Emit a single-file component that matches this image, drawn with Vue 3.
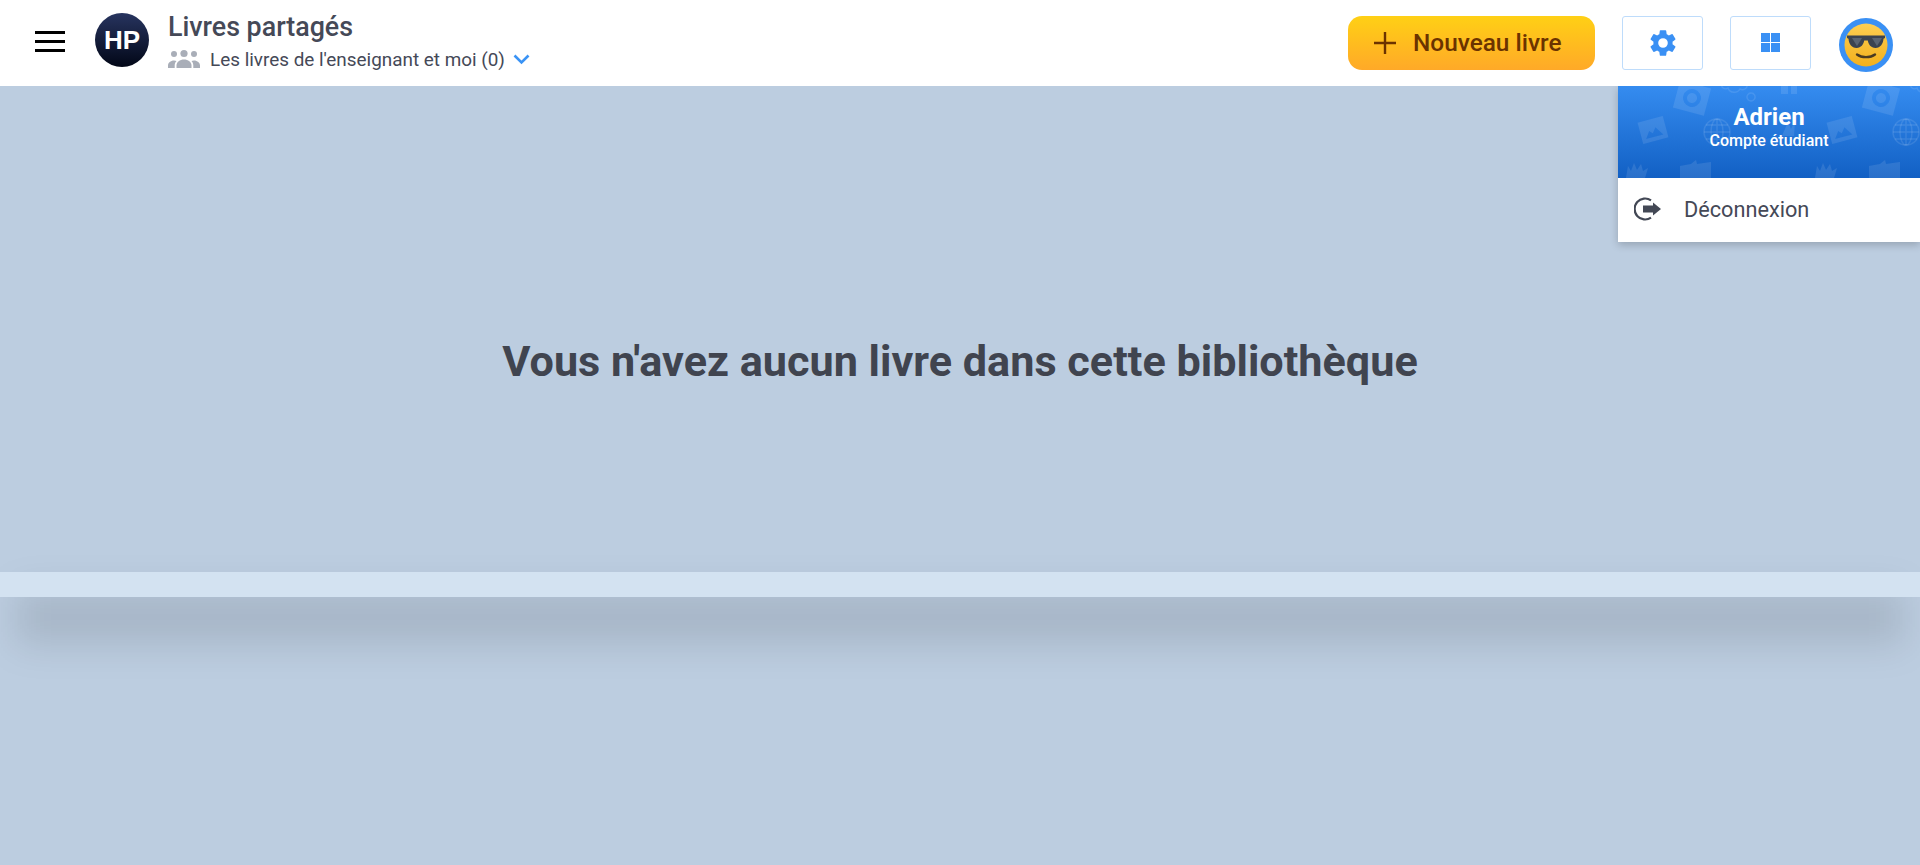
<script setup>
const patternFill = 'rgba(255, 255, 255, 0.1)'
</script>

<template>
  <div class="page">
    <header class="topbar">
      <button class="burger" aria-label="Menu">
        <span></span><span></span><span></span>
      </button>
      <div class="logo">HP</div>
      <div class="titles">
        <div class="title">Livres partagés</div>
        <div class="subtitle">
          <svg class="group-icon" viewBox="0 0 32 20" width="32" height="20">
            <circle cx="6" cy="5" r="3" fill="#a9aeb8" />
            <circle cx="16" cy="4.500" r="3.600" fill="#a9aeb8" />
            <circle cx="26" cy="5" r="3" fill="#a9aeb8" />
            <path d="M0 19v-2.500c0-2.600 2.600-5 6-5 1 0 1.800.2 2.500.5-1.200 1.300-1.800 2.800-1.800 4.500V19z" fill="#a9aeb8" />
            <path d="M8.500 19v-2.500c0-3.400 3.300-6 7.500-6s7.500 2.600 7.500 6V19z" fill="#a9aeb8" />
            <path d="M32 19v-2.500c0-2.600-2.600-5-6-5-1 0-1.800.2-2.500.5 1.200 1.300 1.800 2.800 1.800 4.500V19z" fill="#a9aeb8" />
          </svg>
          <span>Les livres de l'enseignant et moi (0)</span>
          <svg class="chevron" viewBox="0 0 17 11" width="17" height="11">
            <path d="M1.500 1.500 8.500 8.500l7-7" fill="none" stroke="#3a93f5" stroke-width="2.600" />
          </svg>
        </div>
      </div>

      <button class="new-book">
        <svg viewBox="0 0 22 22" width="22" height="22">
          <path d="M11 0v22M0 11h22" stroke="#6b3300" stroke-width="2.400" />
        </svg>
        <span>Nouveau livre</span>
      </button>

      <button class="square-btn" aria-label="Réglages">
        <svg viewBox="0 0 24 24" width="32" height="32">
          <path fill="#3a90f4" d="M19.140 12.940c.04-.3.060-.61.060-.94 0-.32-.02-.64-.07-.94l2.030-1.580a.49.49 0 0 0 .12-.61l-1.920-3.320a.49.49 0 0 0-.59-.22l-2.390.96c-.5-.38-1.030-.7-1.620-.94l-.36-2.540a.48.48 0 0 0-.48-.41h-3.840a.47.47 0 0 0-.47.41l-.36 2.540c-.59.24-1.130.57-1.620.94l-2.390-.96a.48.48 0 0 0-.59.22L2.740 8.870a.47.47 0 0 0 .12.61l2.030 1.580c-.05.3-.09.63-.09.94s.02.640.07.94l-2.030 1.580a.49.49 0 0 0-.12.61l1.920 3.320c.12.220.37.290.59.220l2.390-.96c.5.380 1.030.7 1.620.94l.36 2.540c.05.240.24.410.48.410h3.840c.24 0 .44-.17.470-.41l.36-2.540c.59-.24 1.130-.56 1.620-.94l2.390.96c.22.080.47 0 .59-.22l1.920-3.320a.47.47 0 0 0-.12-.61zM12 15.600A3.610 3.610 0 0 1 8.400 12 3.610 3.610 0 0 1 12 8.400a3.610 3.610 0 0 1 3.600 3.600 3.610 3.610 0 0 1-3.600 3.600z" />
        </svg>
      </button>
      <button class="square-btn" aria-label="Affichage">
        <svg viewBox="0 0 19 19" width="19" height="19">
          <path fill="#3a90f4" d="M0 0h9v9H0zM10 0h9v9h-9zM0 10h9v9H0zM10 10h9v9h-9z" />
        </svg>
      </button>

      <div class="avatar">
        <svg viewBox="0 0 54 54" width="54" height="54">
          <defs>
            <linearGradient id="face" x1="0" y1="0" x2="0" y2="1">
              <stop offset="0" stop-color="#fdce52" />
              <stop offset="1" stop-color="#f3b01c" />
            </linearGradient>
          </defs>
          <circle cx="27" cy="27" r="27" fill="#3a90f4" />
          <circle cx="27" cy="27" r="21.500" fill="url(#face)" />
          <path d="M8 17.500h38v2.500l-1.500.8c-.3 5-3 9.200-8 9.200-4.700 0-7-3.800-7.700-7.500h-3.600c-.7 3.700-3 7.500-7.700 7.500-5 0-7.700-4.200-8-9.200L8 20z" fill="#3b4350" />
          <path d="M13 20h10l-5 8zM33 20h10l-5 8z" fill="#5a6472" />
          <path d="M18 36.500c4.500 3.500 13.500 3.500 18 0" fill="none" stroke="#4a3a22" stroke-width="2.400" stroke-linecap="round" />
        </svg>
      </div>
    </header>

    <main class="content">
      <section class="empty">
        <h1>Vous n'avez aucun livre dans cette bibliothèque</h1>
      </section>
      <div class="strip"></div>
    </main>

    <aside class="user-menu">
      <div class="user-head">
        <svg class="user-pattern" width="100%" height="92">
          <defs>
            <pattern id="doodles" width="189" height="92" patternUnits="userSpaceOnUse">
              <g :fill="patternFill">
                <g transform="rotate(15 74 12)">
                  <path fill-rule="evenodd" d="M58-2h8l3-4h10l3 4h8v28H58zM74 3a9 9 0 1 0 0 18 9 9 0 0 0 0-18zm0 4a5 5 0 1 1 0 10 5 5 0 0 1 0-10z" />
                </g>
                <g transform="rotate(-15 35 44)">
                  <path fill-rule="evenodd" d="M22 33h26v22H22zM26 51h18l-6-9-4 5-3-3z" />
                </g>
                <g fill="none" :stroke="patternFill" stroke-width="1.400">
                  <circle cx="99" cy="46" r="13" />
                  <ellipse cx="99" cy="46" rx="6" ry="13" />
                  <path d="M99 33v26M86 46h26M88 39h22M88 53h22" />
                  <path d="M104 -4c-2 6 3 8 6 6 2 6 10 5 12 1 4 2 8-1 7-5M133 7a4 4 0 1 0 .1 0" />
                </g>
                <path d="M163-4h7v12h-7zM173-4h6v12h-6z" />
                <path d="M164 50l6-14 3 7 4-8-1 15z" />
                <path d="M8 92l2-12 3 5 3-8 3 7 4-6 2 7 5-3-3 10z" />
                <path d="M62 92v-12l11-2 5-4 1 4 14-2v16z" />
              </g>
            </pattern>
          </defs>
          <rect width="100%" height="92" fill="url(#doodles)" />
        </svg>
        <div class="user-name">Adrien</div>
        <div class="user-role">Compte étudiant</div>
      </div>
      <div class="logout">
        <svg viewBox="0 0 27 24" width="27" height="24">
          <path d="M17 3.300A10.500 10.500 0 1 0 17 20.700" fill="none" stroke="#434855" stroke-width="2.200" />
          <path d="M9 8.500h10V5.500l8 6.500-8 6.500v-3H9z" fill="#434855" />
        </svg>
        <span>Déconnexion</span>
      </div>
    </aside>
  </div>
</template>

<style scoped>
.page {
  position: relative;
  height: 865px;
  overflow: hidden;
  font-family: Roboto, "Liberation Sans", sans-serif;
  color: #454957;
  background: #bccde0;
}

.topbar {
  position: relative;
  z-index: 3;
  height: 86px;
  box-sizing: border-box;
  display: flex;
  align-items: center;
  padding-left: 35px;
  background: #fff;
}

.topbar > * {
  flex-shrink: 0;
}

button {
  padding: 0;
  border: 0;
  background: none;
  font-family: inherit;
}

.burger {
  width: 30px;
  margin-bottom: 3px;
  display: flex;
  flex-direction: column;
  gap: 6.500px;
}

.burger span {
  height: 2.500px;
  background: #000;
}

.logo {
  width: 54px;
  height: 54px;
  margin: 0 0 6px 30px;
  border-radius: 50%;
  display: flex;
  align-items: center;
  justify-content: center;
  font-family: "Liberation Sans", sans-serif;
  font-size: 26px;
  font-weight: 700;
  color: #fff;
  background: linear-gradient(#27345f, #020717);
}

.titles {
  flex: 1 0 0;
  margin-left: 19px;
}

.title {
  margin-top: -2px;
  font-size: 26.800px;
  font-weight: 500;
  line-height: 30px;
}

.subtitle {
  display: flex;
  align-items: center;
  height: 26px;
  margin-top: 4px;
  font-size: 18.900px;
}

.group-icon {
  margin-right: 10px;
}

.chevron {
  margin-left: 8px;
}

.new-book {
  width: 247px;
  height: 54px;
  margin-top: -1px;
  display: flex;
  align-items: center;
  gap: 17px;
  padding-left: 26px;
  box-sizing: border-box;
  border-radius: 14px;
  font-size: 24.400px;
  font-weight: 500;
  color: #6b3300;
  background: linear-gradient(#ffd015, #ffa928);
}

.square-btn {
  width: 81px;
  height: 54px;
  margin: -1px 0 0 27px;
  display: flex;
  align-items: center;
  justify-content: center;
  box-sizing: border-box;
  border: 1px solid #bedcfb;
  border-radius: 3px;
  background: #fff;
}

.avatar {
  width: 54px;
  height: 54px;
  margin: 3px 27px 0 28px;
}

.avatar svg {
  display: block;
}

.content {
  isolation: isolate;
}

.empty {
  height: 486px;
  box-sizing: border-box;
  padding-top: 249px;
  text-align: center;
}

.empty h1 {
  margin: 0;
  font-size: 43.200px;
  font-weight: 700;
  line-height: 54px;
  color: #40444f;
}

.strip {
  position: relative;
  height: 25px;
  background: #d3e2f1;
}

/* ombre floue sous la bande */
.strip::after {
  content: '';
  position: absolute;
  top: 18px;
  left: 16px;
  right: 16px;
  height: 54px;
  z-index: -1;
  background: rgba(0, 0, 0, 0.11);
  filter: blur(18px);
}

.user-menu {
  position: absolute;
  top: 86px;
  right: 0;
  z-index: 2;
  width: 302px;
  box-shadow: 0 3px 8px rgba(0, 0, 0, 0.2);
}

.user-head {
  position: relative;
  height: 92px;
  box-sizing: border-box;
  padding-top: 17px;
  text-align: center;
  color: #fff;
  background: linear-gradient(#358cf0, #1260c4);
}

.user-pattern {
  position: absolute;
  inset: 0;
}

.user-name,
.user-role {
  position: relative;
}

.user-name {
  font-size: 24px;
  font-weight: 700;
  line-height: 28px;
}

.user-role {
  font-size: 16px;
  font-weight: 500;
  line-height: 19px;
}

.logout {
  height: 64px;
  display: flex;
  align-items: center;
  gap: 23px;
  padding: 0 0 2px 16px;
  box-sizing: border-box;
  font-size: 21.700px;
  background: #fff;
}
</style>
